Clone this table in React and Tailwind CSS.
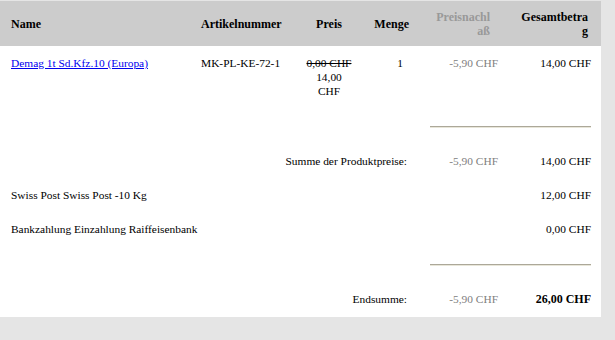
const cols = "grid grid-cols-[190px_106px_66px_52px_86px_101px]";

function Rule() {
  return (
    <div className="ml-[430px] w-[161px]">
      <div className="h-px bg-[#aca899]" />
      <div className="h-px bg-[#e8e6d9]" />
    </div>
  );
}

function SumRow({ label, discount, total, bold }) {
  return (
    <div className={`${cols} h-[34px] items-center`}>
      <div className="col-span-4 text-right pr-[7px]">{label}</div>
      <div className="text-right pr-[2px] text-[#808080]">{discount}</div>
      <div className={`text-right pr-[10px] ${bold ? "font-bold text-[12px]" : ""}`}>{total}</div>
    </div>
  );
}

function LineRow({ label, total }) {
  return (
    <div className={`${cols} h-[34px] items-center`}>
      <div className="col-span-5 pl-[11px]">{label}</div>
      <div className="text-right pr-[10px]">{total}</div>
    </div>
  );
}

export default function App() {
  return (
    <div
      className="h-[340px] w-[615px] bg-[#e5e5e5] pt-px text-[11.4px] leading-[14px] text-black"
      style={{ fontFamily: '"Liberation Serif", "Times New Roman", serif' }}
    >
      <div className="w-[601px] bg-white pb-px">
        {/* header */}
        <div className={`${cols} h-[45px] items-center bg-[#cccccc] font-bold text-[12px]`}>
          <div className="pl-[11px]">Name</div>
          <div className="pl-[11px]">Artikelnummer</div>
          <div className="text-center">Preis</div>
          <div className="text-right pr-[5px]">Menge</div>
          <div className="text-right pr-[10px] text-[#999999]">
            Preisnachl
            <br />
            aß
          </div>
          <div className="text-right pr-[13px]">
            Gesamtbetra
            <br />g
          </div>
        </div>

        {/* product */}
        <div className={`${cols} h-[80px] pt-[10px] items-start`}>
          <div className="pl-[11px]">
            <a href="#" className="text-[#0000ee] underline">
              Demag 1t Sd.Kfz.10 (Europa)
            </a>
          </div>
          <div className="pl-[11px]">MK-PL-KE-72-1</div>
          <div className="text-center">
            <span className="line-through">0,00 CHF</span>
            <br />
            14,00
            <br />
            CHF
          </div>
          <div className="text-right pr-[11px]">1</div>
          <div className="text-right pr-[2px] text-[#808080]">-5,90 CHF</div>
          <div className="text-right pr-[10px]">14,00 CHF</div>
        </div>

        <Rule />
        <div className="h-[16px]" />
        <SumRow label="Summe der Produktpreise:" discount="-5,90 CHF" total="14,00 CHF" />
        <LineRow label="Swiss Post Swiss Post -10 Kg" total="12,00 CHF" />
        <LineRow label="Bankzahlung Einzahlung Raiffeisenbank" total="0,00 CHF" />
        <div className="h-[18px]" />
        <Rule />
        <div className="h-[16px]" />
        <SumRow label="Endsumme:" discount="-5,90 CHF" total="26,00 CHF" bold />
      </div>
    </div>
  );
}
